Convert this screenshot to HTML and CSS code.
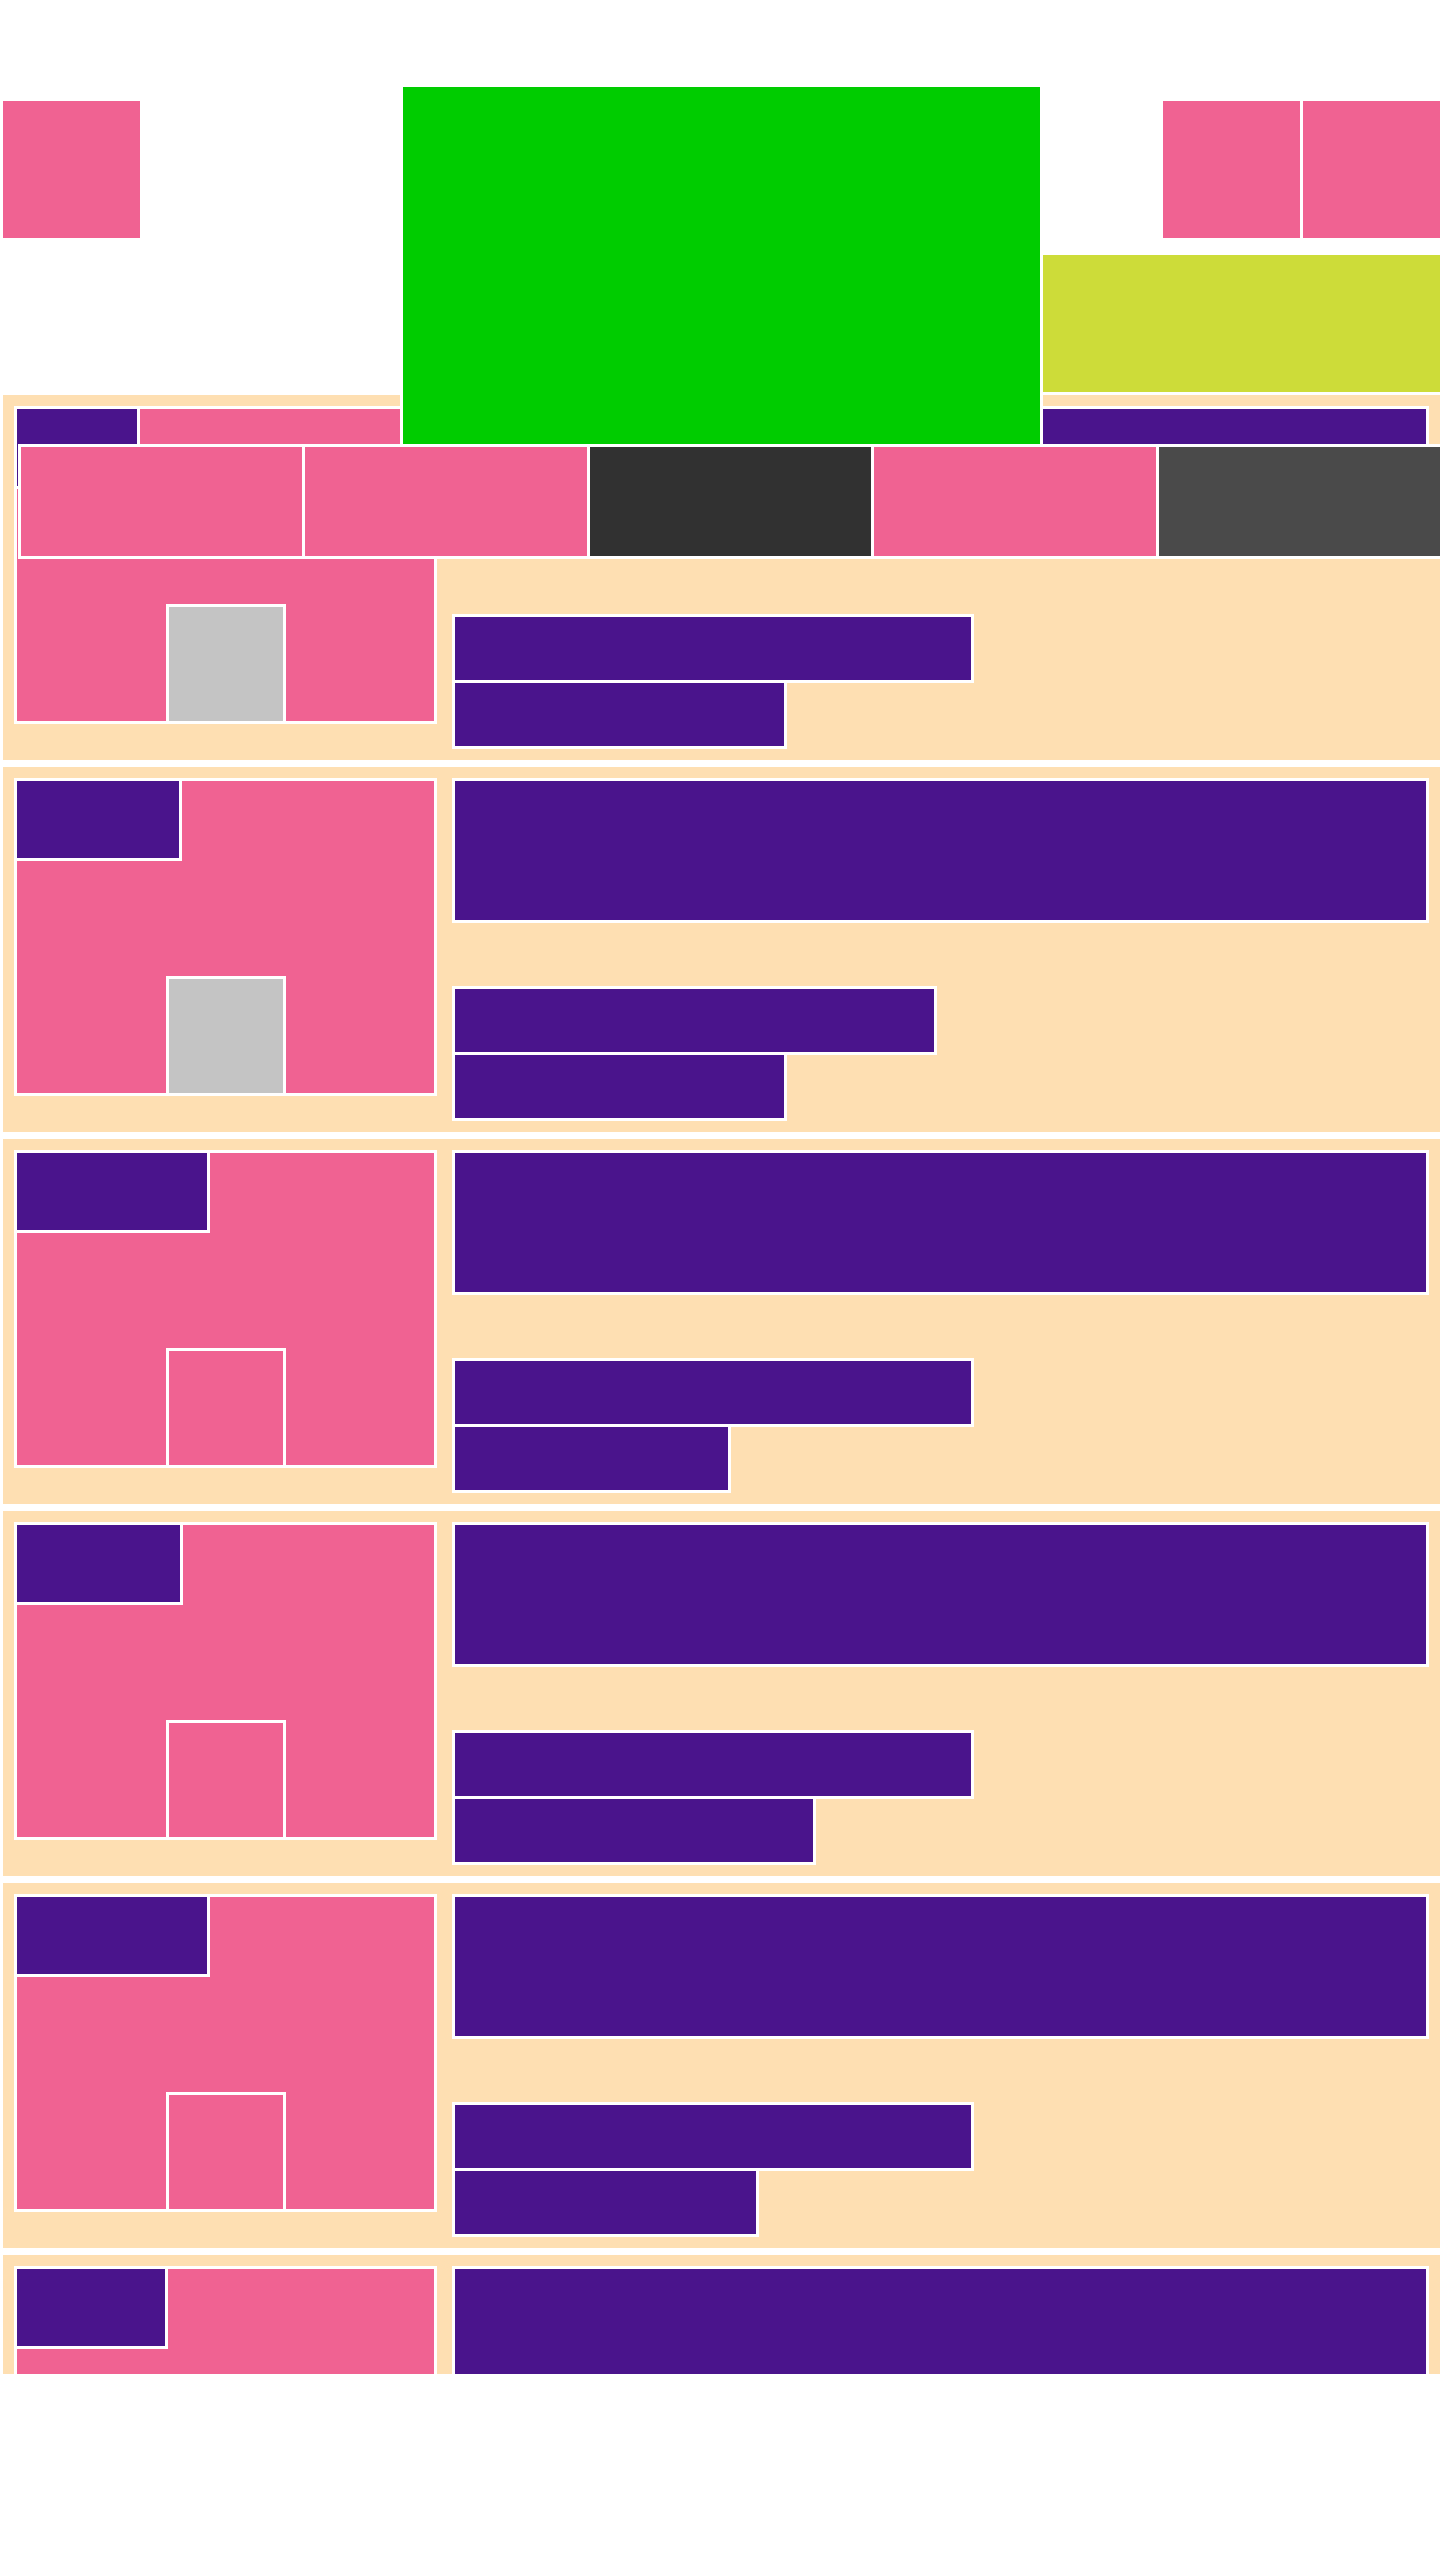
FILE: index.html
```html
<!DOCTYPE html>
<html lang="en">
<head>
    <meta charset="UTF-8">
    <meta name="viewport" content="width=device-width, initial-scale=1.0">
    <title>Feed</title>
    <link rel="stylesheet" href="styles.css">
</head>
<body>
<div class="page">
    <!-- top bar -->
    <header class="top">
        <div class="tile"></div>
        <div class="top-right">
            <div class="tile-pair">
                <div class="tile"></div>
                <div class="tile"></div>
            </div>
            <div class="banner"></div>
        </div>
    </header>

    <!-- overlays -->
    <div class="hero"></div>
    <nav class="tabs">
        <div class="tab pink"></div>
        <div class="tab pink"></div>
        <div class="tab dark"></div>
        <div class="tab pink"></div>
        <div class="tab grey"></div>
    </nav>

    <!-- feed -->
    <main class="feed">
        <article class="card">
            <div class="thumb">
                <span class="tag" style="width:120px"></span>
                <span class="avatar"></span>
            </div>
            <div class="body">
                <div class="title"></div>
                <div class="line" style="width:516px"></div>
                <div class="line" style="width:329px"></div>
            </div>
        </article>
        <article class="card">
            <div class="thumb">
                <span class="tag" style="width:162px"></span>
                <span class="avatar"></span>
            </div>
            <div class="body">
                <div class="title"></div>
                <div class="line" style="width:479px"></div>
                <div class="line" style="width:329px"></div>
            </div>
        </article>
        <article class="card">
            <div class="thumb">
                <span class="tag" style="width:190px"></span>
                <span class="avatar pink"></span>
            </div>
            <div class="body">
                <div class="title"></div>
                <div class="line" style="width:516px"></div>
                <div class="line" style="width:273px"></div>
            </div>
        </article>
        <article class="card">
            <div class="thumb">
                <span class="tag" style="width:163px"></span>
                <span class="avatar pink"></span>
            </div>
            <div class="body">
                <div class="title"></div>
                <div class="line" style="width:516px"></div>
                <div class="line" style="width:358px"></div>
            </div>
        </article>
        <article class="card">
            <div class="thumb">
                <span class="tag" style="width:190px"></span>
                <span class="avatar pink"></span>
            </div>
            <div class="body">
                <div class="title"></div>
                <div class="line" style="width:516px"></div>
                <div class="line" style="width:301px"></div>
            </div>
        </article>
        <article class="card">
            <div class="thumb">
                <span class="tag" style="width:148px"></span>
                <span class="avatar pink"></span>
            </div>
            <div class="body">
                <div class="title"></div>
                <div class="line" style="width:516px"></div>
                <div class="line" style="width:329px"></div>
            </div>
        </article>
    </main>
</div>
</body>
</html>
```

FILE: styles.css
```css
html, body {
    margin: 0;
    background: #fff;
    overflow-x: hidden;
}
.page {
    position: relative;
    width: 1440px;
}
.top {
    display: flex;
    justify-content: space-between;
    align-items: flex-start;
    height: 395px;
    box-sizing: border-box;
    padding: 101px 0 0 3px;
}
.tile {
    width: 137px;
    height: 137px;
    background: #f06292;
}
.top-right {
    width: 397px;
    display: flex;
    flex-direction: column;
    align-items: flex-end;
}
.tile-pair {
    display: flex;
    gap: 3px;
}
.banner {
    align-self: stretch;
    height: 137px;
    margin-top: 17px;
    background: #cddc39;
}
.hero {
    position: absolute;
    left: 400px;
    top: 84px;
    width: 637px;
    height: 357px;
    border: 3px solid #fff;
    background: #00cc00;
    z-index: 2;
}
.tabs {
    position: absolute;
    left: 18px;
    top: 444px;
    width: 1419px;
    display: grid;
    grid-template-columns: repeat(5, 1fr);
    gap: 3px;
    border: 3px solid #fff;
    background: #fff;
    z-index: 2;
}
.tab {
    height: 109px;
}
.tab.pink { background: #f06292; }
.tab.dark { background: #313131; }
.tab.grey { background: #4a4a4a; }
.feed {
    margin-left: 3px;
    height: 1979px;
    overflow: hidden;
    display: flex;
    flex-direction: column;
    gap: 7px;
}
.card {
    flex-shrink: 0;
    display: flex;
    gap: 15px;
    align-items: flex-start;
    padding: 11px;
    background: #fedfb2;
}
.thumb {
    width: 417px;
    height: 312px;
    border: 3px solid #fff;
    background: #f06292;
    display: flex;
    flex-direction: column;
    align-items: flex-start;
}
.tag {
    display: block;
    height: 77px;
    background: #4a148c;
    border-right: 3px solid #fff;
    border-bottom: 3px solid #fff;
}
.avatar {
    display: block;
    margin-top: auto;
    align-self: center;
    width: 114px;
    height: 114px;
    border: 3px solid #fff;
    border-bottom: 0;
    background: #c4c4c4;
}
.avatar.pink {
    background: #f06292;
}
.body {
    flex: 1;
}
.title {
    height: 139px;
    border: 3px solid #fff;
    background: #4a148c;
}
.line {
    height: 63px;
    border: 3px solid #fff;
    background: #4a148c;
    margin-top: -3px;
}
.title + .line {
    margin-top: 63px;
}
```
